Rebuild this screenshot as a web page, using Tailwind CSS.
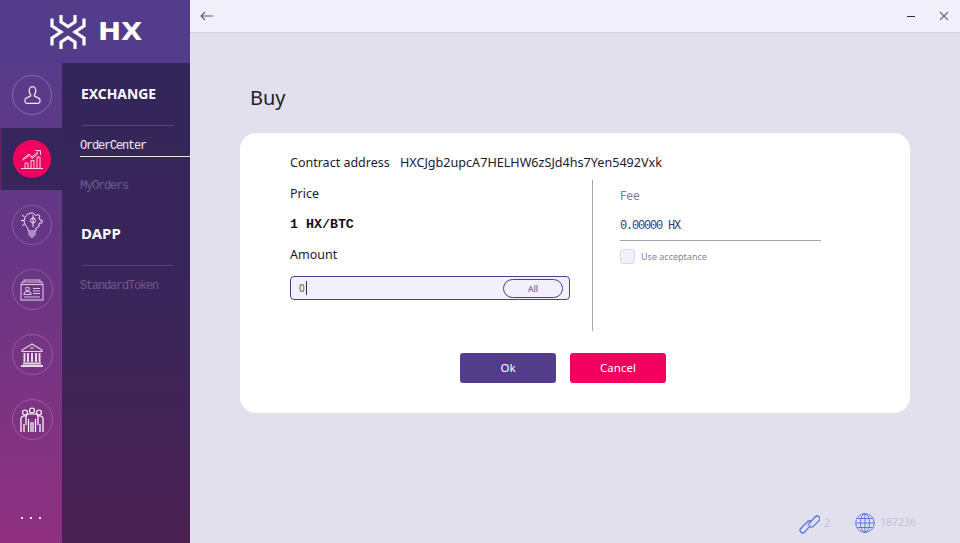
<!DOCTYPE html>
<html lang="en">
<head>
  <meta charset="UTF-8">
  <title>HX Buy</title>
  <script src="https://cdn.jsdelivr.net/npm/@tailwindcss/browser@4"></script>
</head>
<body class="m-0 overflow-hidden">
  <div class="flex w-[960px] h-[543px] font-['Noto_Sans','Open_Sans',sans-serif] bg-[#e3e0ee]">

    <!-- Sidebar -->
    <aside class="w-[190px] h-full flex flex-col shrink-0 bg-linear-to-b from-[#523d8c] via-[#6a3585] to-[#8f2f7f]">
      <div class="h-[63px] flex items-center pl-[50px] bg-[#533d8b] gap-[12px] shrink-0">
        <svg width="36" height="36" viewBox="0 0 36 36" fill="none" stroke="#fff" stroke-width="3.2">
          <path d="M2 4.500 V12 L11 18 L2 24 V31.500"/>
          <path d="M34 4.500 V12 L25 18 L34 24 V31.500"/>
          <path d="M11 1 V8 L18 12.500 L25 8 V1"/>
          <path d="M11 35 V28 L18 23.500 L25 28 V35"/>
        </svg>
        <span class="inline-block origin-left scale-x-[1.15] font-['DejaVu_Sans',sans-serif] font-bold text-[24px] leading-none text-white">HX</span>
      </div>
      <div class="flex flex-1">
        <!-- Icon rail -->
        <nav class="w-[62px] flex flex-col items-center shrink-0">
          <div class="h-[65px] w-full flex items-start justify-center pt-[12px] pl-[2px]">
            <div class="w-[40px] h-[40px] rounded-full border border-white/25 flex items-center justify-center">
              <svg width="17" height="20" viewBox="0 0 20 24" fill="none" stroke="#f0e8f6" stroke-width="1.500">
                <path d="M6 7 a4 5 0 1 1 8 0 c0 3 -2 5 -2 6 l6 3 c1.500 1 1.500 6 -1 6 H3 c-2.500 0 -2.500 -5 -1 -6 l6 -3 c0 -1 -2 -3 -2 -6z"/>
              </svg>
            </div>
          </div>
          <div class="h-[62px] w-full flex items-center justify-center bg-[#37265c] border-l border-[#6c2660]">
            <div class="w-[38px] h-[38px] rounded-full bg-[#f0005f] flex items-center justify-center">
              <svg width="24" height="22" viewBox="0 0 24 22" fill="none" stroke="#fbd3e4" stroke-width="1">
                <path d="M3 11 L9 6 L12 9 L19 3 M15 2.500 H20.500 V7"/>
                <path d="M2 12.500 L9 7.500 L12 10.500 L18 5.500"/>
                <path d="M5 20 V15 H8 V20 M11 20 V12.500 H14 V20 M17 20 V9 H20 V20"/>
                <path d="M1 20.500 H23"/>
              </svg>
            </div>
          </div>
          <div class="h-[3px]"></div>
          <div class="h-[65px] w-full flex items-start justify-center pt-[12px] pl-[2px]">
            <div class="w-[40px] h-[40px] rounded-full border border-white/20 flex items-center justify-center">
              <svg width="22" height="26" viewBox="0 0 22 26" fill="none" stroke="#f0e4f2" stroke-width="1">
                <path d="M12 1 a8 8 0 0 0 -6 14 c1 1 1 2 1 4 h8 v-3 l2 -1 1.500 -1 -1 -2 1.500 -1 h2 v-3 h-2 l-1 -2 1 -2 -2 -1.500 -1.500 1 -2 -1z"/>
                <circle cx="12" cy="8.500" r="2.500"/>
                <path d="M12 3 V15 M7 21 H15 M7.500 23 H14.500 M9.500 25 H12.500"/>
                <path d="M0 8.500 H3 M1 3 L3.500 5 M1 14 L3.500 12"/>
              </svg>
            </div>
          </div>
          <div class="h-[65px] w-full flex items-start justify-center pt-[11px] pl-[2px]">
            <div class="w-[41px] h-[41px] rounded-full border border-white/20 flex items-center justify-center">
              <svg width="24" height="22" viewBox="0 0 24 22" fill="none" stroke="#dcc6e4" stroke-width="1.100">
                <path d="M4 3 V1 H20 V3 M2 5.500 V3 H22 V5.500"/>
                <rect x="1" y="5.500" width="22" height="15.500"/>
                <circle cx="7.500" cy="10" r="1.800"/>
                <path d="M4 15.500 c0 -4 7 -4 7 0z M13 9.500 H20 M13 12 H20 M13 14.500 H20 M4 18 H20"/>
              </svg>
            </div>
          </div>
          <div class="h-[65px] w-full flex items-start justify-center pt-[11px] pl-[2px]">
            <div class="w-[41px] h-[41px] rounded-full border border-white/20 flex items-center justify-center">
              <svg width="24" height="24" viewBox="0 0 24 24" fill="none" stroke="#ecd6ea" stroke-width="1.500">
                <path d="M12 1 L2 7 V8.500 H22 V7z" stroke-width="1.100"/>
                <circle cx="12" cy="5" r="1" stroke-width="0.800"/>
                <path d="M4.500 10 V19 M8 10 V19 M12 10 V19 M16 10 V19 M19.500 10 V19" stroke-width="2"/>
                <path d="M3 20.500 H21 M1 23 H23" stroke-width="2"/>
              </svg>
            </div>
          </div>
          <div class="h-[65px] w-full flex items-start justify-center pt-[11px] pl-[2px]">
            <div class="w-[41px] h-[41px] rounded-full border border-white/20 flex items-center justify-center">
              <svg width="26" height="26" viewBox="0 0 26 26" fill="none" stroke="#fff" stroke-width="1.200">
                <circle cx="13" cy="3.500" r="2.500"/>
                <circle cx="6" cy="5.500" r="2.500"/>
                <circle cx="20" cy="5.500" r="2.500"/>
                <path d="M2 25 V12 c0 -2 1 -3 3 -3 H7 M24 25 V12 c0 -2 -1 -3 -3 -3 H19"/>
                <path d="M7 18 V10 c0 -2 1 -3 3 -3 H16 c2 0 3 1 3 3 V18"/>
                <path d="M9.500 25 V12 M12 25 V15 M14 25 V15 M16.500 25 V12 M5 25 V17 M21 25 V17"/>
              </svg>
            </div>
          </div>
          <div class="flex-1 w-full flex items-end justify-center pb-[24px] gap-[7px]">
            <span class="w-[2px] h-[2px] bg-white"></span>
            <span class="w-[2px] h-[2px] bg-white"></span>
            <span class="w-[2px] h-[2px] bg-white"></span>
          </div>
        </nav>

        <!-- Sub menu -->
        <div class="flex-1 bg-linear-to-b from-[#33265a] via-[#3a2659] to-[#4b2153] flex flex-col">
          <div class="h-[62px] pl-[19px] pt-[20px] font-bold text-[13.900px] leading-[22px] text-white">EXCHANGE</div>
          <div class="ml-[20px] w-[91px] h-px bg-[#54458a]"></div>
          <div class="ml-[18px] h-[31px] border-b border-[#e8e4f0] pt-[13px] font-['Liberation_Mono',monospace] text-[12px] leading-[14px] tracking-[-1.200px] text-[#f0ecf6]">OrderCenter</div>
          <div class="ml-[18px] h-[59px] pt-[22px] font-['Liberation_Mono',monospace] text-[12px] leading-[14px] tracking-[-1.200px] text-[#6c5c8e]">MyOrders</div>
          <div class="h-[50px] pl-[19px] font-bold text-[15px] leading-[22px] text-white pt-[6px]">DAPP</div>
          <div class="ml-[20px] w-[91px] h-px bg-[#54458a] mt-[-1px]"></div>
          <div class="ml-[18px] pt-[13px] font-['Liberation_Mono',monospace] text-[12px] leading-[14px] tracking-[-1.200px] text-[#6c5c8e]">StandardToken</div>
        </div>
      </div>
    </aside>

    <!-- Main -->
    <main class="flex-1 flex flex-col">
      <header class="h-[33px] shrink-0 bg-[#f2f0fb] border-b border-[#d6d2e2] flex items-center justify-between pl-[10px] pr-[11px]">
        <svg width="13" height="10" viewBox="0 0 13 10" fill="none" stroke="#5e5480" stroke-width="1.100"><path d="M13 5 H1 M5 1 L1 5 L5 9"/></svg>
        <div class="flex items-center gap-[24px]">
          <span class="w-[8px] h-px bg-[#2f2560]"></span>
          <svg width="10" height="10" viewBox="0 0 10 10" fill="none" stroke="#6e678c" stroke-width="1.100"><path d="M1 1 L9 9 M9 1 L1 9"/></svg>
        </div>
      </header>

      <section class="flex-1 flex flex-col pl-[50px] pr-[50px]">
        <h1 class="ml-[10px] mt-[51px] text-[20px] leading-[28px] font-normal text-[#222]">Buy</h1>
        <div class="mt-[21px] w-[670px] h-[280px] rounded-[16px] bg-white pl-[50px] pt-[20px] shrink-0">
          <div class="flex items-center h-[20px] text-[12.500px] text-[#1a1a2e]">
            <span class="w-[110px]">Contract address</span>
            <span class="text-[12.600px]">HXCJgb2upcA7HELHW6zSJd4hs7Yen5492Vxk</span>
          </div>
          <div class="flex mt-[7px]">
            <div class="w-[303px] h-[151px] border-r border-[#a5a5ab]">
              <div class="h-[20px] mt-[4px] text-[12.500px] leading-[20px] text-[#1a1a2e]">Price</div>
              <div class="h-[20px] mt-[11px] font-['Liberation_Mono',monospace] font-bold text-[13.300px] leading-[20px] text-[#111]">1 HX/BTC</div>
              <div class="h-[20px] mt-[10px] text-[12.500px] leading-[20px] text-[#1a1a2e]">Amount</div>
              <div class="mt-[11px] w-[280px] h-[24px] rounded-[4px] border border-[#533d8b] bg-[#f2f0fb] flex items-center justify-between pl-[8px] pr-[6px]">
                <span class="text-[10px] leading-[14px] text-[#555] border-r border-[#333] pr-px">0</span>
                <span class="w-[60px] h-[19px] rounded-full border border-[#533d8b] bg-[#f2f0fb] text-center text-[8px] leading-[17px] font-semibold text-[#8a6a9a]">All</span>
              </div>
            </div>
            <div class="pl-[27px]">
              <div class="h-[20px] mt-[6px] text-[12px] leading-[20px] text-[#7d7d9e]">Fee</div>
              <div class="w-[201px] h-[25px] mt-[10px] border-b border-[#a5a5ab] font-['Liberation_Mono',monospace] text-[12px] tracking-[-1.200px] leading-[20px] text-[#3f2f80]">0.00000 HX</div>
              <div class="flex items-center mt-[7px] gap-[6px]">
                <span class="w-[15px] h-[15px] rounded-[3px] border border-[#dcd8ec] bg-[#f2f0fb]"></span>
                <span class="text-[9px] leading-[15px] pt-px text-[#85859c]">Use acceptance</span>
              </div>
            </div>
          </div>
          <div class="flex gap-[14px] ml-[170px] mt-[22px]">
            <button class="w-[96px] h-[30px] rounded-[3px] bg-[#533d8b] text-white text-[11.500px]">Ok</button>
            <button class="w-[96px] h-[30px] rounded-[3px] bg-[#f0005f] text-white text-[11.500px]">Cancel</button>
          </div>
        </div>
        <footer class="mt-auto h-[40px] flex items-center justify-end text-[10.500px] text-[#c4c2d6] mr-[-6px]">
          <svg width="21" height="21" viewBox="0 0 22 22" fill="none" stroke="#5c74dc" stroke-width="1.400">
            <path d="M9 13 L17 4 a2.800 2.800 0 0 1 4 4 L15 14 a2.800 2.800 0 0 1 -4 0"/>
            <path d="M13 9 a2.800 2.800 0 0 0 -4 0 L2 16 a2.800 2.800 0 0 0 4 4 L12 13"/>
          </svg>
          <span class="ml-[4px] w-[31px] text-[11px]">2</span>
          <svg width="20" height="20" viewBox="0 0 20 20" fill="none" stroke="#5c74dc" stroke-width="1">
            <circle cx="10" cy="10" r="9.300"/>
            <ellipse cx="10" cy="10" rx="4.500" ry="9.300"/>
            <path d="M10 1 V19 M1 10 H19 M2.200 5.500 H17.800 M2.200 14.500 H17.800"/>
          </svg>
          <span class="ml-[5px]">187236</span>
        </footer>
      </section>
    </main>
  </div>
</body>
</html>
